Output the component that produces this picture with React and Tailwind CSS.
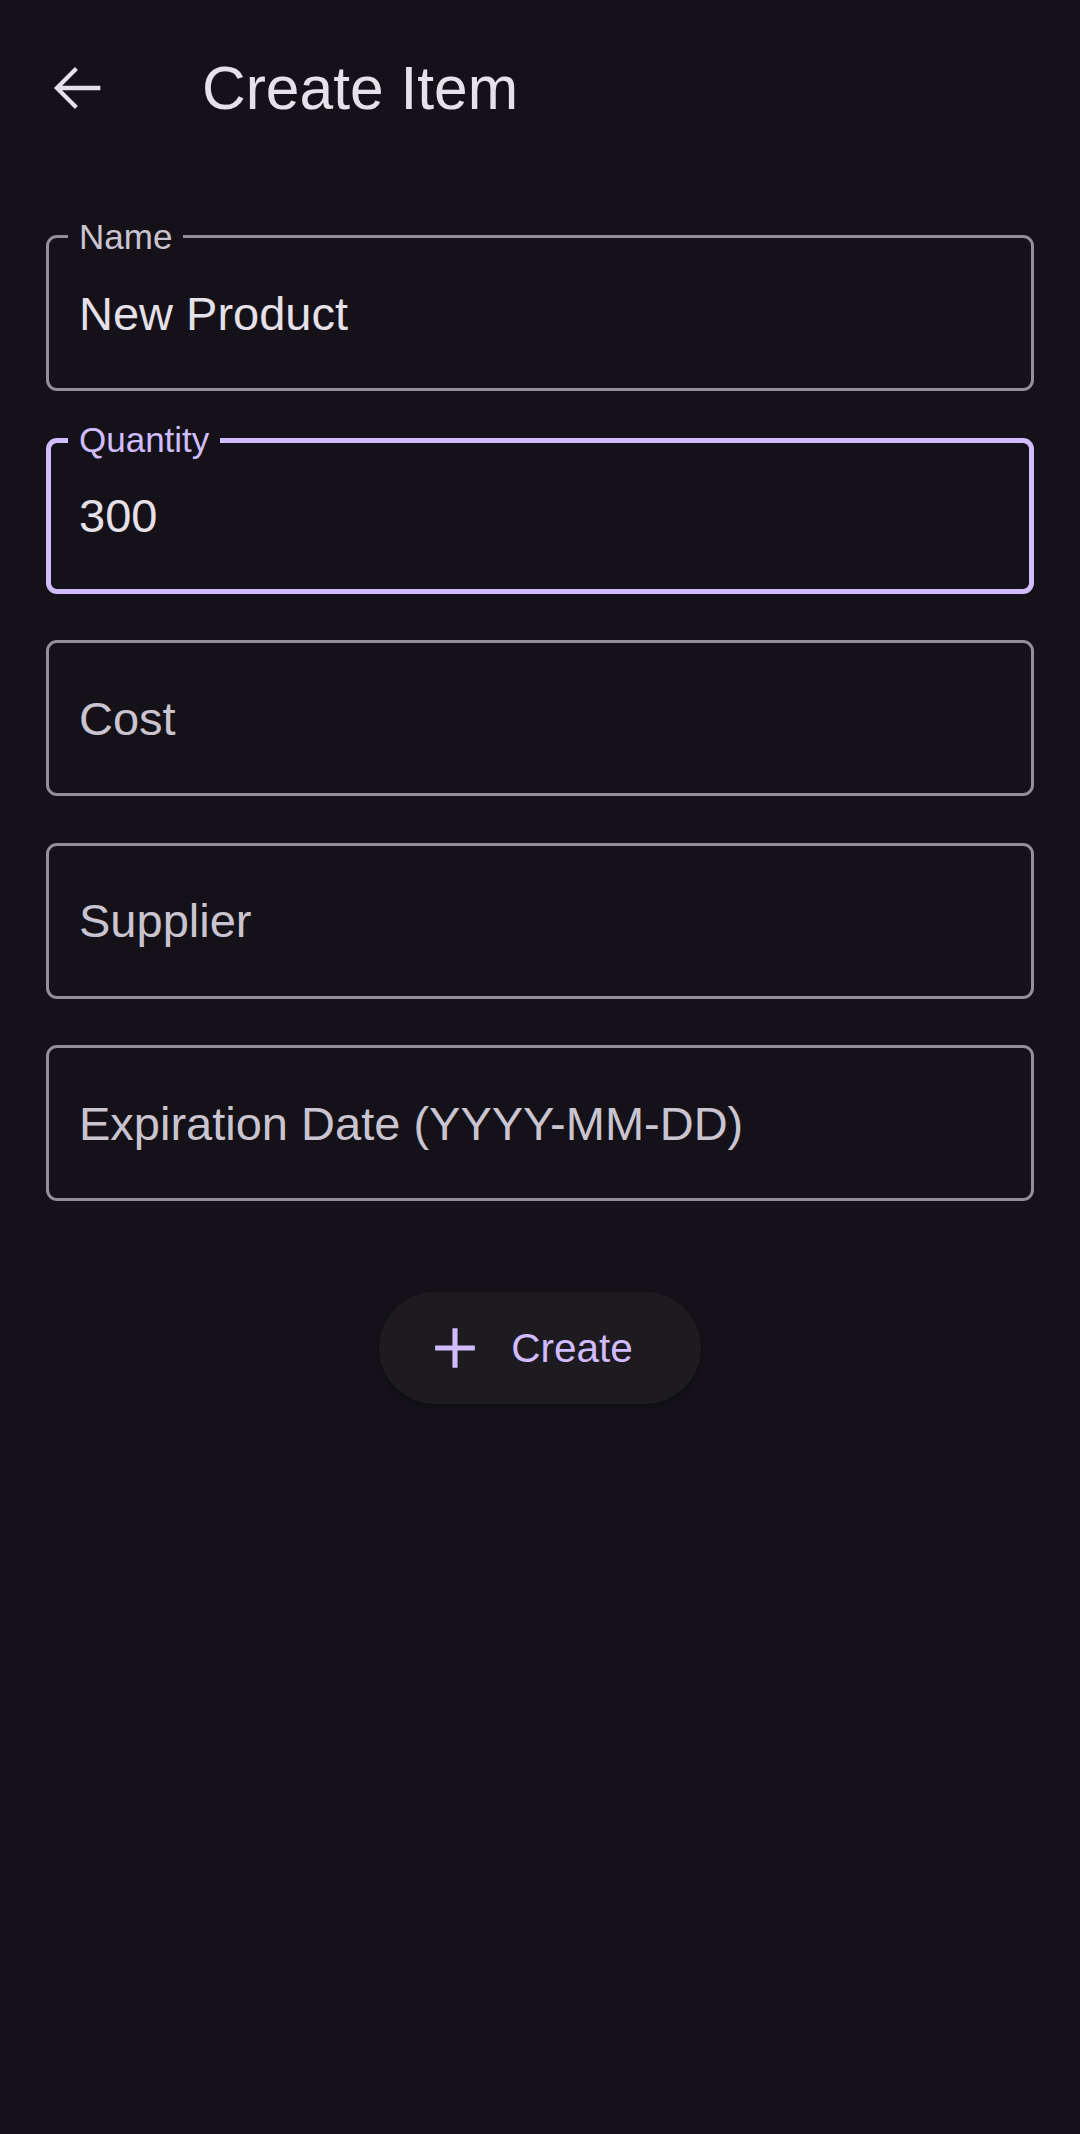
import { useState } from 'react'

const fields = [
  { label: 'Name', value: 'New Product' },
  { label: 'Quantity', value: '300', focused: true },
  { label: 'Cost', value: '' },
  { label: 'Supplier', value: '' },
  { label: 'Expiration Date (YYYY-MM-DD)', value: '' },
]

const OutlinedField = ({ label, value, focused }) => {
  const hasValue = value !== ''

  return (
    <div
      className={`relative h-[156px] rounded-[11px] flex items-center ${
        focused ? 'border-[5px] border-[#d0bcff] pl-[28px]' : 'border-[3px] border-[#938f99] pl-[30px]'
      }`}
    >
      {/* floating label sits over the outline */}
      {hasValue && (
        <span
          className={`absolute px-[11px] bg-[#141218] text-[35px] leading-[40px] ${
            focused ? '-top-[23px] left-[17px] text-[#d0bcff]' : '-top-[21px] left-[19px] text-[#cac4d0]'
          }`}
        >
          {label}
        </span>
      )}
      <span className={`text-[47px] leading-none ${hasValue ? 'text-[#e6e0e9]' : 'text-[#cac4d0]'}`}>
        {hasValue ? value : label}
      </span>
    </div>
  )
}

const App = () => {
  const [items] = useState(fields)

  return (
    <div
      className="w-[1080px] h-[2134px] bg-[#141218] flex flex-col"
      style={{ fontFamily: '"Liberation Sans", Arial, sans-serif' }}
    >
      {/* top app bar */}
      <div className="h-[176px] flex items-center pl-[42px]">
        <svg width="70" height="70" viewBox="0 0 24 24" fill="#e6e0e9">
          <path d="M20 11.2H6.9l5.4-5.4-1-1L4.1 12l7.2 7.2 1-1-5.4-5.4H20v-1.6z" />
        </svg>
        <h1 className="ml-[90px] text-[60.5px] leading-none text-[#e6e0e9] font-normal">Create Item</h1>
      </div>

      {/* form */}
      <div className="px-[46px] pt-[59px] flex flex-col gap-[46.5px]">
        {items.map((f) => (
          <OutlinedField key={f.label} {...f} />
        ))}
      </div>

      <div className="flex justify-center mt-[91px]">
        <button className="h-[112px] flex items-center pl-[42px] pr-[68px] rounded-full bg-[#1d1b20] shadow-[0_2px_4px_rgba(0,0,0,0.35)]">
          <svg width="68" height="68" viewBox="0 0 24 24" fill="#d0bcff">
            <path d="M19 12.9h-6.1V19h-1.8v-6.1H5v-1.8h6.1V5h1.8v6.1H19v1.8z" />
          </svg>
          <span className="ml-[22px] text-[40.5px] leading-none text-[#d0bcff]">Create</span>
        </button>
      </div>
    </div>
  )
}

export default App
